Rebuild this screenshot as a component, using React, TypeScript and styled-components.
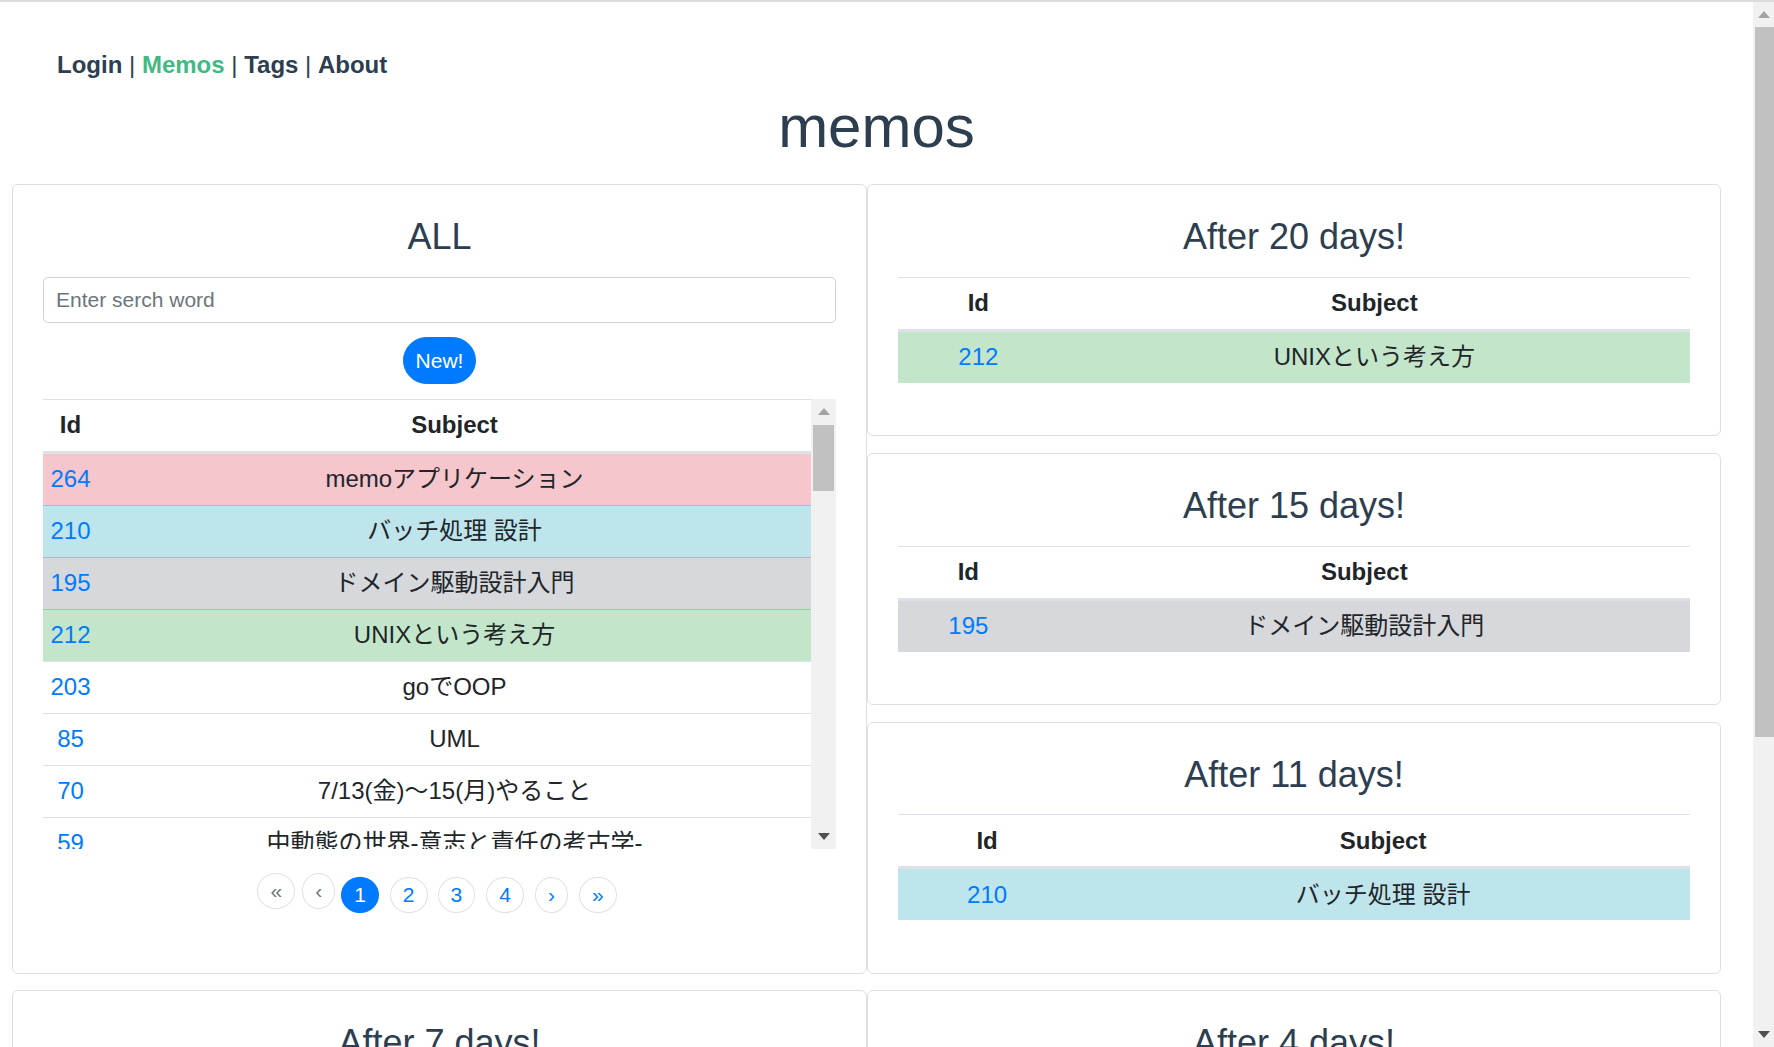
import React from 'react';
import styled, { createGlobalStyle } from 'styled-components';

const GlobalStyle = createGlobalStyle`
  html, body {
    margin: 0;
    padding: 0;
    height: 100%;
    overflow: hidden;
    background: #fff;
  }
  body {
    font-family: 'Liberation Sans', Arial, 'Noto Sans CJK JP', sans-serif;
  }
  * { box-sizing: border-box; }
`;

type Variant = 'danger' | 'info' | 'secondary' | 'success' | 'plain';

const variants: Record<Variant, { bg: string; border: string }> = {
  danger: { bg: '#f5c6cb', border: '#ed969e' },
  info: { bg: '#bee5eb', border: '#86cfda' },
  secondary: { bg: '#d6d8db', border: '#b3b7bb' },
  success: { bg: '#c3e6cb', border: '#8fd19e' },
  plain: { bg: 'transparent', border: '#dee2e6' },
};

interface Memo {
  id: number;
  subject: string;
  variant: Variant;
}

const allMemos: Memo[] = [
  { id: 264, subject: 'memoアプリケーション', variant: 'danger' },
  { id: 210, subject: 'バッチ処理 設計', variant: 'info' },
  { id: 195, subject: 'ドメイン駆動設計入門', variant: 'secondary' },
  { id: 212, subject: 'UNIXという考え方', variant: 'success' },
  { id: 203, subject: 'goでOOP', variant: 'plain' },
  { id: 85, subject: 'UML', variant: 'plain' },
  { id: 70, subject: '7/13(金)～15(月)やること', variant: 'plain' },
  { id: 59, subject: '中動態の世界-意志と責任の考古学-', variant: 'plain' },
  { id: 58, subject: 'リーダブルコード', variant: 'plain' },
  { id: 41, subject: 'Vue.jsとBootstrapでの画面作成', variant: 'plain' },
];

const reminders: { title: string; memos: Memo[] }[] = [
  { title: 'After 20 days!', memos: [{ id: 212, subject: 'UNIXという考え方', variant: 'success' }] },
  { title: 'After 15 days!', memos: [{ id: 195, subject: 'ドメイン駆動設計入門', variant: 'secondary' }] },
  { title: 'After 11 days!', memos: [{ id: 210, subject: 'バッチ処理 設計', variant: 'info' }] },
];

const lower: { title: string; memos: Memo[] }[] = [
  { title: 'After 7 days!', memos: [{ id: 264, subject: 'memoアプリケーション', variant: 'danger' }] },
  { title: 'After 4 days!', memos: [{ id: 203, subject: 'goでOOP', variant: 'plain' }] },
];

const Window = styled.div`
  display: flex;
  flex-direction: column;
  height: 100vh;
  border-top: 2px solid #dcdcdc;
`;

const Viewport = styled.div`
  display: flex;
  flex: 1;
  min-height: 0;
`;

const Main = styled.main`
  flex: 1;
  min-width: 0;
  overflow: hidden;
  padding: 0 12px;
  color: #2c3e50;
`;

const Nav = styled.nav`
  padding: 45.4px 45px 0;
  font-size: 24px;
  line-height: 36px;
  color: #2c3e50;
`;

const NavLink = styled.a<{ $active?: boolean }>`
  font-weight: bold;
  color: ${p => (p.$active ? '#42b983' : '#2c3e50')};
  text-decoration: none;
`;

const PageTitle = styled.h1`
  margin: 8px 0 20.8px;
  font-size: 60px;
  font-weight: 500;
  line-height: 72px;
  text-align: center;
  color: #2c3e50;
`;

const CardGrid = styled.div`
  display: grid;
  grid-template-columns: 855px 854px;
  row-gap: 16.5px;
  align-items: stretch;
`;

const Card = styled.section<{ $tall?: boolean }>`
  display: flex;
  flex-direction: column;
  grid-row: ${p => (p.$tall ? '1 / span 3' : 'auto')};
  grid-column: ${p => (p.$tall ? '1' : 'auto')};
  padding: 30px 30px 30px;
  background: #fff;
  border: 1.5px solid #dfdfdf;
  border-radius: 6px;
`;

const CardTitle = styled.h4`
  margin: 0 0 18.6px;
  font-size: 36px;
  font-weight: 500;
  line-height: 43.2px;
  text-align: center;
  color: #2c3e50;
`;

const SearchInput = styled.input`
  width: 100%;
  height: 46.5px;
  padding: 0 12px;
  font-family: inherit;
  font-size: 21px;
  color: #495057;
  border: 1.5px solid #ced4da;
  border-radius: 4.8px;
  outline: none;
  &::placeholder {
    color: #6c757d;
  }
`;

const ButtonRow = styled.div`
  display: flex;
  justify-content: center;
  margin-top: 14px;
`;

const NewButton = styled.button`
  height: 46.5px;
  padding: 0 12px;
  font-family: inherit;
  font-size: 21px;
  line-height: 1;
  color: #fff;
  background: #007bff;
  border: 1.5px solid #007bff;
  border-radius: 50rem;
`;

const ScrollBox = styled.div`
  display: flex;
  height: 450px;
  margin-top: 15px;
`;

const TableViewport = styled.div`
  flex: 1;
  min-width: 0;
  overflow: hidden;
`;

const Table = styled.table<{ $spaced?: boolean }>`
  width: 100%;
  border-collapse: collapse;
  margin-bottom: ${p => (p.$spaced ? '22.4px' : '0')};
  font-size: 24px;
  color: #212529;
  text-align: center;
`;

const Th = styled.th<{ $narrow?: boolean }>`
  padding: 7.5px;
  line-height: 36px;
  font-weight: bold;
  vertical-align: bottom;
  border-top: 1.5px solid #dee2e6;
  border-bottom: 3px solid #dee2e6;
  width: ${p => (p.$narrow ? '1%' : 'auto')};
  white-space: ${p => (p.$narrow ? 'nowrap' : 'normal')};
`;

const Row = styled.tr<{ $variant: Variant }>`
  background: ${p => variants[p.$variant].bg};
  & > td {
    border-top: 1.5px solid ${p => variants[p.$variant].border};
  }
`;

const Td = styled.td`
  padding: 7.5px;
  line-height: 36px;
  white-space: nowrap;
`;

const IdLink = styled.a`
  color: #007bff;
  text-decoration: none;
`;

const Track = styled.div<{ $width: number }>`
  display: flex;
  flex-direction: column;
  flex: none;
  width: ${p => p.$width}px;
  background: #f1f1f1;
`;

const ArrowButton = styled.div<{ $size: number }>`
  display: flex;
  flex: none;
  align-items: center;
  justify-content: center;
  height: ${p => p.$size}px;
`;

const Thumb = styled.div<{ $height: number; $inset: string }>`
  flex: none;
  height: ${p => p.$height}px;
  margin: ${p => p.$inset};
  background: #c1c1c1;
`;

const TrackRest = styled.div`
  flex: 1;
`;

const Pager = styled.ul`
  display: flex;
  align-items: flex-start;
  justify-content: center;
  margin: 24px 0 0;
  padding: 0 5px 0 0;
  list-style: none;
`;

type PageState = 'disabled' | 'active' | 'normal';

const PageItem = styled.li<{ $state: PageState; $gap: number }>`
  height: 36px;
  margin-left: ${p => p.$gap}px;
  margin-top: ${p => (p.$state === 'disabled' ? '0' : '4.5px')};
  padding: 0 12px;
  font-size: 21px;
  line-height: 33px;
  border-radius: 50%;
  border: 1.5px solid ${p => (p.$state === 'active' ? '#007bff' : '#dee2e6')};
  background: ${p => (p.$state === 'active' ? '#007bff' : '#fff')};
  color: ${p => (p.$state === 'active' ? '#fff' : p.$state === 'disabled' ? '#6c757d' : '#007bff')};
`;

const pages: { label: string; state: PageState; gap: number }[] = [
  { label: '«', state: 'disabled', gap: 0 },
  { label: '‹', state: 'disabled', gap: 7 },
  { label: '1', state: 'active', gap: 6 },
  { label: '2', state: 'normal', gap: 11 },
  { label: '3', state: 'normal', gap: 10 },
  { label: '4', state: 'normal', gap: 11 },
  { label: '›', state: 'normal', gap: 11 },
  { label: '»', state: 'normal', gap: 11 },
];

function Arrow({ dir, color }: { dir: 'up' | 'down'; color: string }) {
  return (
    <svg width="12" height="7" viewBox="0 0 12 7">
      <polygon points={dir === 'up' ? '6,0 12,7 0,7' : '0,0 12,0 6,7'} fill={color} />
    </svg>
  );
}

function MemoTable({ memos, narrowId, spaced }: { memos: Memo[]; narrowId?: boolean; spaced?: boolean }) {
  return (
    <Table $spaced={spaced}>
      <thead>
        <tr>
          <Th $narrow={narrowId}>Id</Th>
          <Th>Subject</Th>
        </tr>
      </thead>
      <tbody>
        {memos.map(m => (
          <Row key={m.id} $variant={m.variant}>
            <Td>
              <IdLink href="#">{m.id}</IdLink>
            </Td>
            <Td>{m.subject}</Td>
          </Row>
        ))}
      </tbody>
    </Table>
  );
}

function ReminderCard({ title, memos }: { title: string; memos: Memo[] }) {
  return (
    <Card>
      <CardTitle>{title}</CardTitle>
      <MemoTable memos={memos} spaced />
    </Card>
  );
}

export default function App() {
  return (
    <>
      <GlobalStyle />
      <Window>
        <Viewport>
          <Main>
            <Nav>
              <NavLink href="#">Login</NavLink> | <NavLink href="#" $active>Memos</NavLink> |{' '}
              <NavLink href="#">Tags</NavLink> | <NavLink href="#">About</NavLink>
            </Nav>
            <PageTitle>memos</PageTitle>
            <CardGrid>
              <Card $tall>
                <CardTitle>ALL</CardTitle>
                <SearchInput placeholder="Enter serch word" />
                <ButtonRow>
                  <NewButton>New!</NewButton>
                </ButtonRow>
                <ScrollBox>
                  <TableViewport>
                    <MemoTable memos={allMemos} narrowId />
                  </TableViewport>
                  <Track $width={25}>
                    <ArrowButton $size={25}>
                      <Arrow dir="up" color="#a3a3a3" />
                    </ArrowButton>
                    <Thumb $height={66} $inset="0.7px 2px 0" />
                    <TrackRest />
                    <ArrowButton $size={25}>
                      <Arrow dir="down" color="#505050" />
                    </ArrowButton>
                  </Track>
                </ScrollBox>
                <Pager>
                  {pages.map(p => (
                    <PageItem key={p.label} $state={p.state} $gap={p.gap}>
                      {p.label}
                    </PageItem>
                  ))}
                </Pager>
              </Card>
              {reminders.map(r => (
                <ReminderCard key={r.title} title={r.title} memos={r.memos} />
              ))}
              {lower.map(r => (
                <ReminderCard key={r.title} title={r.title} memos={r.memos} />
              ))}
            </CardGrid>
          </Main>
          <Track $width={21}>
            <ArrowButton $size={25}>
              <Arrow dir="up" color="#a3a3a3" />
            </ArrowButton>
            <Thumb $height={710} $inset="0 0 0 2px" />
            <TrackRest />
            <ArrowButton $size={25}>
              <Arrow dir="down" color="#505050" />
            </ArrowButton>
          </Track>
        </Viewport>
      </Window>
    </>
  );
}
